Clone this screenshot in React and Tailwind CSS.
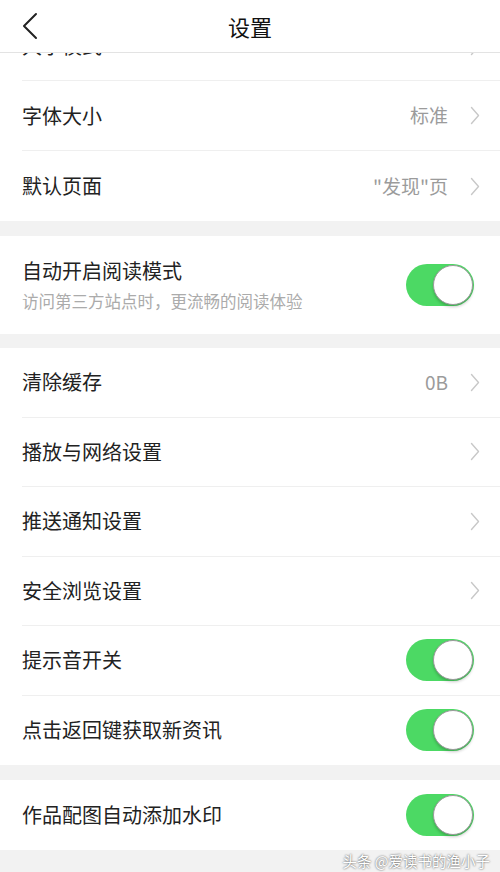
import React from "react";

const FONT = { fontFamily: '"Noto Sans CJK SC", "Noto Sans", sans-serif' };

const Chevron = () => (
  <svg width="10" height="19" viewBox="0 0 10 19" fill="none" className="shrink-0">
    <path d="M1.5 1.5 L8.5 9.5 L1.5 17.5" stroke="#c8c8c8" strokeWidth="1.4" strokeLinecap="round" strokeLinejoin="round" />
  </svg>
);

const Toggle = () => (
  <div className="w-[68px] h-[42px] rounded-full bg-[#4cd964] flex items-center justify-end p-[1px] shrink-0">
    <div className="w-[40px] h-[40px] rounded-full bg-white border border-[#9a9a9a] shadow-[0_2px_3px_rgba(0,0,0,0.2)]" />
  </div>
);

const Row = ({ title, value, toggle, last, h = "h-[70px]" }) => (
  <div className="pl-[22px] bg-white">
    <div className={`${h} flex items-center ${last ? "" : "border-b border-[#efefef]"} ${toggle ? "pr-[26px]" : "pr-[20px]"}`}>
      <span className="flex-1 text-[20px] text-[#222]">{title}</span>
      {value && <span className="text-[19px] text-[#9b9b9b] mr-[22px]">{value}</span>}
      {toggle ? <Toggle /> : <Chevron />}
    </div>
  </div>
);

const Gap = ({ h }) => <div className={`${h} bg-[#f2f2f2]`} />;

export default function App() {
  return (
    <div className="w-[500px] h-[872px] bg-[#f2f2f2] overflow-hidden flex flex-col" style={FONT}>
      {/* header */}
      <div className="h-[53px] shrink-0 bg-white border-b border-[#e3e3e3] grid grid-cols-[70px_1fr_70px] items-center">
        <div className="pl-[21px] flex items-center">
          <svg width="18" height="28" viewBox="0 0 18 28" fill="none">
            <path d="M15 2 L3 14 L15 26" stroke="#222" strokeWidth="2" strokeLinecap="round" strokeLinejoin="round" />
          </svg>
        </div>
        <div className="text-center text-[22px] text-[#111]">设置</div>
        <div />
      </div>

      {/* row scrolled under the header */}
      <div className="h-[28px] shrink-0 overflow-hidden bg-white pl-[22px]">
        <div className="h-[69px] mt-[-41px] flex items-center border-b border-[#efefef] pr-[20px]">
          <span className="flex-1 text-[20px] text-[#222]">大字模式</span>
          <Chevron />
        </div>
      </div>

      <Row title="字体大小" value="标准" />
      <Row title="默认页面" value={'"发现"页'} last />
      <Gap h="h-[15px]" />

      <div className="h-[98px] bg-white pl-[22px] pr-[26px] flex items-center">
        <div className="flex-1 flex flex-col">
          <span className="text-[20px] text-[#222] leading-[28px]">自动开启阅读模式</span>
          <span className="text-[16.5px] text-[#ababab] leading-[24px] mt-[4px]">访问第三方站点时，更流畅的阅读体验</span>
        </div>
        <Toggle />
      </div>
      <Gap h="h-[14px]" />

      <Row title="清除缓存" value="0B" h="h-[69.5px]" />
      <Row title="播放与网络设置" h="h-[69.5px]" />
      <Row title="推送通知设置" h="h-[69.5px]" />
      <Row title="安全浏览设置" h="h-[69.5px]" />
      <Row title="提示音开关" toggle h="h-[69.5px]" />
      <Row title="点击返回键获取新资讯" toggle last h="h-[69.5px]" />
      <Gap h="h-[15px]" />

      <Row title="作品配图自动添加水印" toggle last />

      <div className="flex-1 flex justify-end items-start pr-[10px]">
        <span className="text-[14.5px] text-white [text-shadow:0_0_2px_rgba(0,0,0,0.8)]">头条 @爱读书的渔小子</span>
      </div>
    </div>
  );
}
